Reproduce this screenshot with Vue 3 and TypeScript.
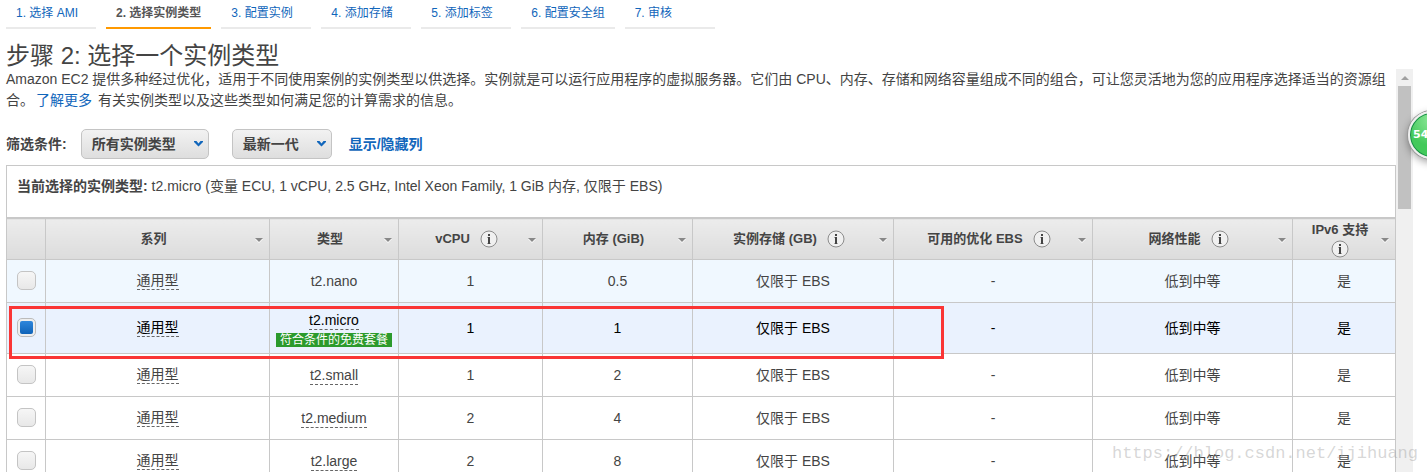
<script setup lang="ts">
import { ref } from 'vue'

interface Step {
  label: string
  active?: boolean
}

interface Column {
  key: string
  label: string
  width: number
  info?: boolean
}

interface Instance {
  family: string
  type: string
  vcpu: string
  memory: string
  storage: string
  ebs: string
  network: string
  ipv6: string
  plain?: boolean
  hover?: boolean
  free?: boolean
}

const steps: Step[] = [
  { label: '1. 选择 AMI' },
  { label: '2. 选择实例类型', active: true },
  { label: '3. 配置实例' },
  { label: '4. 添加存储' },
  { label: '5. 添加标签' },
  { label: '6. 配置安全组' },
  { label: '7. 审核' },
]

const columns: Column[] = [
  { key: 'family', label: '系列', width: 224 },
  { key: 'type', label: '类型', width: 129 },
  { key: 'vcpu', label: 'vCPU', width: 144, info: true },
  { key: 'memory', label: '内存 (GiB)', width: 150 },
  { key: 'storage', label: '实例存储 (GB)', width: 201, info: true },
  { key: 'ebs', label: '可用的优化 EBS', width: 199, info: true },
  { key: 'network', label: '网络性能', width: 200, info: true },
  { key: 'ipv6', label: 'IPv6 支持', width: 103, info: true },
]

const common = { family: '通用型', storage: '仅限于 EBS', ebs: '-', network: '低到中等', ipv6: '是' }

const instances: Instance[] = [
  { ...common, type: 't2.nano', vcpu: '1', memory: '0.5', plain: true, hover: true },
  { ...common, type: 't2.micro', vcpu: '1', memory: '1', free: true },
  { ...common, type: 't2.small', vcpu: '1', memory: '2' },
  { ...common, type: 't2.medium', vcpu: '2', memory: '4' },
  { ...common, type: 't2.large', vcpu: '2', memory: '8' },
]

const selected = ref('t2.micro')
const familyFilter = ref('所有实例类型')
const generation = ref('最新一代')

function choose(type: string) {
  selected.value = type
}
</script>

<template>
  <div class="page">
    <nav class="steps" aria-label="步骤">
      <a v-for="s in steps" :key="s.label" href="#" class="step" :class="{ active: s.active }">{{ s.label }}</a>
    </nav>

    <h1 class="title">步骤 2: 选择一个实例类型</h1>

    <div class="body">
      <main class="content">
        <p class="intro">
          Amazon EC2 提供多种经过优化，适用于不同使用案例的实例类型以供选择。实例就是可以运行应用程序的虚拟服务器。它们由 CPU、内存、存储和网络容量组成不同的组合，可让您灵活地为您的应用程序选择适当的资源组合。<a href="#" class="more">了解更多</a> 有关实例类型以及这些类型如何满足您的计算需求的信息。
        </p>

        <div class="filters">
          <label class="filter-label" for="family">筛选条件:</label>
          <span class="picker">
            <select id="family" v-model="familyFilter">
              <option>所有实例类型</option>
            </select>
            <svg class="chevron" viewBox="0 0 9 6" aria-hidden="true"><path d="M0 0h2.500l2 2.500L6.500 0H9v1L4.500 5.500 0 1z" /></svg>
          </span>
          <span class="picker second">
            <select v-model="generation" aria-label="实例世代">
              <option>最新一代</option>
            </select>
            <svg class="chevron" viewBox="0 0 9 6" aria-hidden="true"><path d="M0 0h2.500l2 2.500L6.500 0H9v1L4.500 5.500 0 1z" /></svg>
          </span>
          <a href="#" class="toggle">显示/隐藏列</a>
        </div>

        <div class="current">
          <strong>当前选择的实例类型:</strong> t2.micro (变量 ECU, 1 vCPU, 2.5 GHz, Intel Xeon Family, 1 GiB 内存, 仅限于 EBS)
        </div>

        <div class="grid">
          <table>
            <colgroup>
              <col style="width: 39px" />
              <col v-for="c in columns" :key="c.key" :style="{ width: c.width + 'px' }" />
            </colgroup>
            <thead>
              <tr>
                <th></th>
                <th v-for="c in columns" :key="c.key">
                  <div class="head">
                    <span class="head-text">
                      <span>{{ c.label }}</span>
                      <svg v-if="c.info" class="info" viewBox="0 0 18 18" aria-hidden="true">
                        <circle cx="9" cy="9" r="8" />
                        <path d="M8 4h2v2H8zM8 7h2v7H8z" />
                        <path class="serif" d="M7 7h1v1H7zM7 13h1v1H7zM10 13h1v1h-1z" />
                      </svg>
                    </span>
                    <svg class="sort" viewBox="0 0 8 5" aria-hidden="true"><path class="lo" d="M0 1h8L4 5z" /><path d="M0 0h8L4 4z" /></svg>
                  </div>
                </th>
              </tr>
            </thead>
            <tbody>
              <tr v-for="r in instances" :key="r.type" :class="{ hover: r.hover, chosen: selected === r.type }">
                <td class="pick">
                  <input type="checkbox" :aria-label="r.type" :checked="selected === r.type" @change="choose(r.type)" />
                </td>
                <td class="family"><span class="dash">{{ r.family }}</span></td>
                <td>
                  <span :class="{ dash: !r.plain }">{{ r.type }}</span>
                  <span v-if="r.free" class="free">符合条件的免费套餐</span>
                </td>
                <td>{{ r.vcpu }}</td>
                <td>{{ r.memory }}</td>
                <td>{{ r.storage }}</td>
                <td>{{ r.ebs }}</td>
                <td>{{ r.network }}</td>
                <td>{{ r.ipv6 }}</td>
              </tr>
            </tbody>
          </table>
          <div class="marker"></div>
        </div>
      </main>

      <div class="scrollbar" aria-hidden="true">
        <svg class="arrow" viewBox="0 0 8 4"><path d="M4 0l4 4H0z" /></svg>
        <div class="thumb"></div>
      </div>
    </div>

    <div class="ball">54</div>
    <div class="watermark">https://blog.csdn.net/ijihuang</div>
  </div>
</template>

<style>
body {
  margin: 0;
  overflow: hidden;
}
</style>

<style scoped>
.page {
  position: relative;
  display: flex;
  flex-direction: column;
  height: 100vh;
  overflow: hidden;
  background: #fff;
  color: #444;
  font: 14px/21px "Liberation Sans", "Noto Sans CJK SC", sans-serif;
}
a {
  color: #1166bb;
  text-decoration: none;
}
.steps {
  display: flex;
  flex: none;
  gap: 10px;
  padding-left: 6px;
}
.step {
  box-sizing: border-box;
  min-width: 90px;
  height: 29px;
  padding: 4px 10px 0;
  border-bottom: 2px solid #eaeaea;
  font-size: 12px;
  line-height: 18px;
  white-space: nowrap;
}
.step.active {
  border-color: #f90;
  color: #555;
  font-weight: bold;
}
.title {
  flex: none;
  height: 28px;
  margin: 12px 0 0 6px;
  font-size: 24px;
  font-weight: normal;
  line-height: 29px;
}
.body {
  display: flex;
  flex: 1;
  min-height: 0;
  padding: 0 14px 0 6px;
}
.content {
  flex: 1;
  min-width: 0;
}
.intro {
  margin: 0;
}
.more {
  margin: 0 2px;
}
.filters {
  display: flex;
  align-items: center;
  height: 30px;
  padding: 18px 0 6px;
  font-weight: bold;
}
.filter-label {
  margin-right: 14px;
}
.picker {
  position: relative;
  margin-right: 23px;
}
.picker.second {
  margin-right: 17px;
}
.picker select {
  box-sizing: border-box;
  display: block;
  height: 30px;
  padding: 0 32px 0 10px;
  border: 1px solid #c4c4c4;
  border-radius: 5px;
  appearance: none;
  background: linear-gradient(#f2f2f2, #dedede);
  color: #444;
  font: inherit;
}
.chevron {
  position: absolute;
  top: 12px;
  right: 6px;
  width: 9px;
  height: 6px;
  fill: #1166bb;
  pointer-events: none;
}
.current {
  box-sizing: border-box;
  height: 53px;
  padding: 10px;
  border: 1px solid #c8c8c8;
}
.grid {
  position: relative;
}
table {
  width: 100%;
  table-layout: fixed;
  border-collapse: collapse;
}
th,
td {
  padding: 0;
  border: 1px solid #c8c8c8;
  text-align: center;
}
th {
  height: 40px;
  background: linear-gradient(#ececec, #dcdcdc);
  font-size: 13px;
  line-height: 20px;
}
td {
  height: 42px;
}
.head {
  display: flex;
  align-items: center;
  padding-right: 6px;
}
.head-text {
  display: flex;
  flex: 1;
  flex-wrap: wrap;
  align-items: center;
  justify-content: center;
  gap: 0 10px;
  padding: 0 2px 0 8px;
}
.info {
  width: 18px;
  height: 18px;
  fill: #444;
}
.info circle {
  fill: #f0f0f0;
  stroke: #8c8c8c;
}
.info .serif {
  fill: #aaa;
}
.sort {
  flex: none;
  width: 8px;
  height: 5px;
  margin-top: 2px;
  fill: #888;
}
.sort .lo {
  fill: #fff;
}
.hover td {
  background: #f0f8ff;
}
.chosen td {
  height: 50px;
  background: #eaf2fe;
  color: #000;
}
.dash {
  display: inline-block;
  border-bottom: 1px dashed #666;
  line-height: 17px;
}
.family,
.pick {
  padding-bottom: 2px;
  height: 40px;
}
.chosen .family,
.chosen .pick {
  height: 48px;
}
.free {
  display: block;
  width: max-content;
  margin: 2px auto 0;
  padding: 0 4px;
  background: #2c9a2c;
  color: #fff;
  font-size: 12px;
  line-height: 14px;
}
.pick input {
  display: block;
  box-sizing: border-box;
  width: 19px;
  height: 19px;
  margin: 0 auto;
  border: 1px solid #c4c4c4;
  border-radius: 5px;
  appearance: none;
  background: linear-gradient(#f6f6f6, #e8e8e8);
}
.pick input:checked {
  border-color: #bbb;
  background: linear-gradient(#2e86dc, #0f63b8) content-box, #eee;
  padding: 2px;
}
.marker {
  position: absolute;
  top: 88px;
  left: 3px;
  box-sizing: border-box;
  width: 67.3%;
  height: 53px;
  border: 3px solid #fa3535;
  pointer-events: none;
}
.scrollbar {
  display: flex;
  flex: none;
  flex-direction: column;
  align-items: center;
  width: 17px;
  background: #f0f0f0;
}
.arrow {
  flex: none;
  width: 8px;
  height: 4px;
  margin: 7px 0 6px;
  fill: #a0a0a0;
}
.thumb {
  width: 13px;
  height: 123px;
  background: #c1c1c1;
}
.ball {
  position: absolute;
  top: 111px;
  right: -29px;
  box-sizing: border-box;
  width: 48px;
  height: 48px;
  padding-left: 3px;
  border: 2px solid #eee;
  border-radius: 50%;
  background: radial-gradient(circle at 50% 15%, #8fe89a, #42c95a 60%);
  box-shadow: 0 0 0 1px #999, 0 3px 8px #0006, inset 0 0 0 1px #178a48;
  color: #fff;
  font: bold 11px/44px "DejaVu Sans", sans-serif;
}
.watermark {
  position: absolute;
  right: 9px;
  bottom: 6px;
  color: #9996;
  font: 17px/24px "Liberation Mono", monospace;
  pointer-events: none;
}
</style>
